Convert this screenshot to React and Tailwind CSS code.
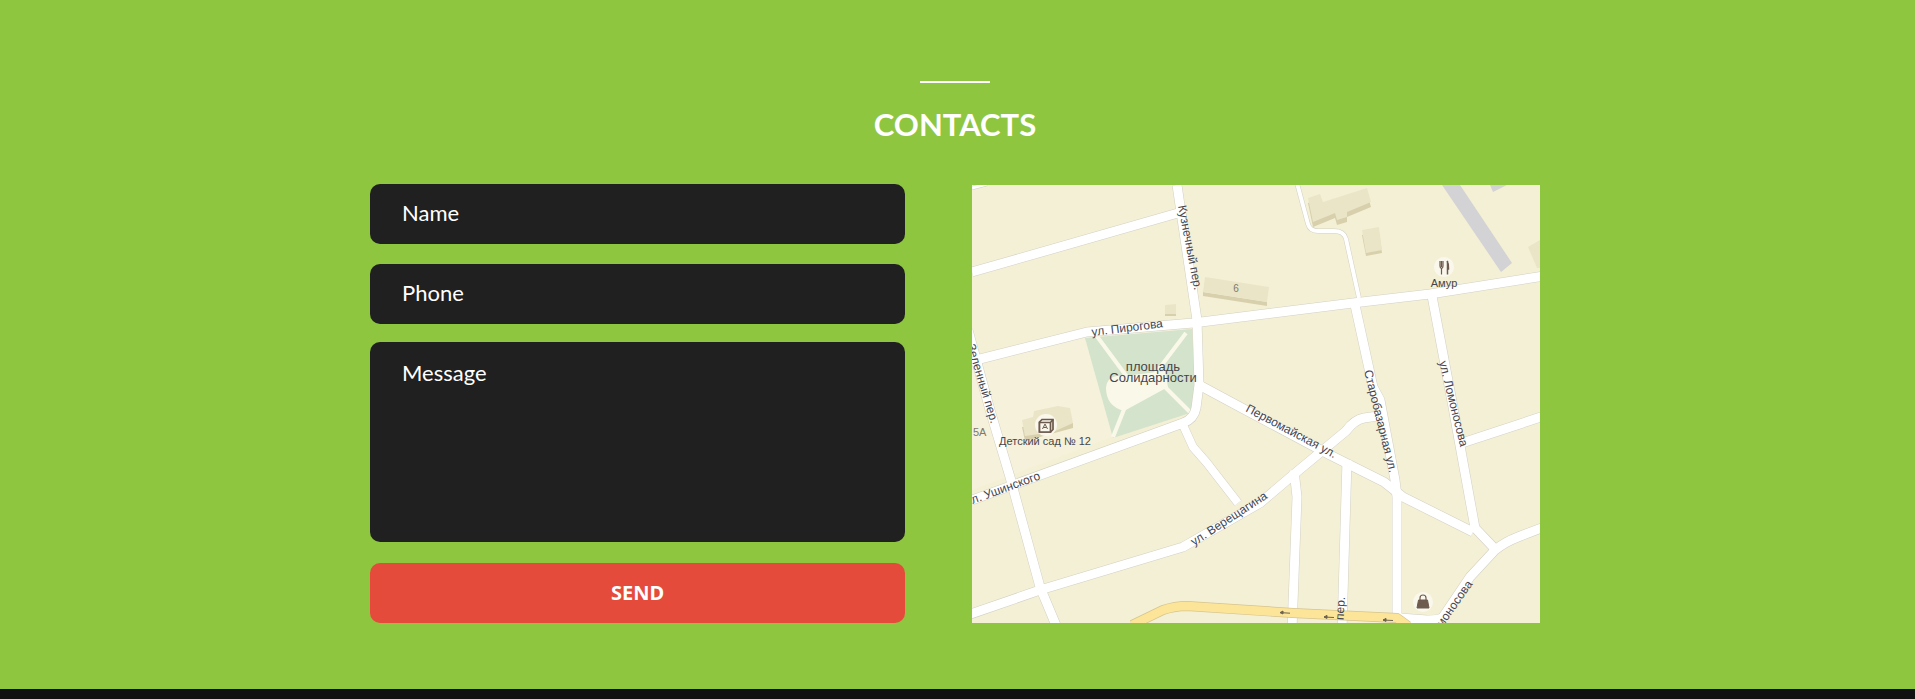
const font = { fontFamily: '"Liberation Sans", Arial, sans-serif' };

// roads are drawn twice, casing first and then the white fill
const ROADS = [
  { d: "M972 272L1178 213", w: 9 },
  { d: "M972 500L1183 423Q1194 419 1196 408L1199 385L1197 320L1177 185", w: 9 },
  { d: "M968 362L1087 332L1193 323L1353 303L1430 294L1544 276", w: 9 },
  { d: "M968 330L990 410L1010 477L1040 587L1058 630", w: 9 },
  { d: "M968 615L1040 590L1183 547L1260 503L1293 475L1346 431Q1354 420 1364 418L1378 416", w: 9 },
  { d: "M1201 386L1240 407L1330 455L1384 482L1403 497L1473 532", w: 9 },
  { d: "M1355 305L1373 387L1380 400L1395 480L1397 497L1397 630", w: 9 },
  { d: "M1432 296L1453 407L1475 528L1495 549", w: 9 },
  { d: "M1462 443L1544 416", w: 9 },
  { d: "M1544 527L1518 537Q1505 542 1495 550L1470 577L1443 617Q1440 620 1427 620L1400 618", w: 9 },
  { d: "M1294 470L1297 497L1292 630", w: 9 },
  { d: "M1347 460L1342 630", w: 9 },
  { d: "M1183 425L1193 447L1207 463L1238 503", w: 8 },
  { d: "M1297 183L1308 224Q1310 231 1318 231L1334 231Q1344 231 1346 239L1359 298", w: 4 },
  { d: "M972 188L987 184", w: 3 },
];

const LABELS = [
  { t: "Кузнечный пер.", x: 1178, y: 206, r: 79 },
  { t: "ул. Пирогова", x: 1092, y: 336, r: -7 },
  { t: "ул. Ломоносова", x: 1439, y: 362, r: 76 },
  { t: "Старобазарная ул.", x: 1364, y: 371, r: 76 },
  { t: "Первомайская ул.", x: 1245, y: 411, r: 28 },
  { t: "ул. Верещагина", x: 1194, y: 546, r: -33 },
  { t: "ул. Ломоносова", x: 1473, y: 584, r: -55, end: true },
  { t: "ул. Ушинского", x: 1041, y: 479, r: -20, end: true },
  { t: "Зеленный пер.", x: 991, y: 424, r: 73, end: true },
  { t: "пер.", x: 1345, y: 597, r: -86, end: true },
];

function MapPicture() {
  return (
    <svg viewBox="972 185 568 438" className="block h-[438px] w-[568px] bg-[#f4f0d5]" style={font}>
      <path d="M972 362L1087 332L1192 329L1196 405L972 490Z" fill="#f6f1da" />

      <path d="M1085 338L1192 329L1196 400L1190 413L1113 438Z" fill="#d4e3cb" />
      <g stroke="#faf9e9" strokeWidth="4" fill="none">
        <path d="M1096 335L1133 385" />
        <path d="M1186 333L1152 378" />
        <path d="M1162 384L1192 414" />
        <path d="M1127 402L1113 437" />
      </g>
      <path d="M1106 388Q1107 374 1125 376L1165 371L1168 387L1124 411Q1106 406 1106 388Z" fill="#faf9e9" />

      <g fill="#d8d0ac">
        <path d="M1308 203L1320 199L1323 207L1367 193L1371 207L1347 217L1347 222L1337 225L1335 218L1313 227Z" />
        <path d="M1362 235L1379 232L1382 253L1366 256Z" />
        <path d="M1203 292L1267 302L1267 306L1203 296Z" />
        <path d="M1165 311L1176 311L1176 316L1165 316Z" />
        <path d="M1022 427L1073 423L1073 428L1025 441Z" />
      </g>
      <g fill="#ebe5c8">
        <path d="M1308 198L1320 194L1323 202L1367 188L1371 202L1347 212L1347 217L1337 220L1335 213L1313 222Z" />
        <path d="M1362 230L1379 227L1382 250L1366 253Z" />
        <path d="M1205 277L1269 287L1267 302L1203 292Z" />
        <path d="M1165 305L1176 304L1176 314L1165 314Z" />
        <path d="M1022 420L1033 417L1034 411L1058 406L1070 408L1073 423L1053 432L1025 436Z" />
        <path d="M1528 247L1540 240L1540 268L1537 268Z" />
      </g>
      <path d="M1442 185L1460 185L1512 263L1501 272Z" fill="#d3d2d4" />
      <path d="M1490 185L1507 185L1493 192Z" fill="#d3d2d4" />

      <g fill="none" strokeLinejoin="round">
        {ROADS.map((r) => (
          <path key={r.d} d={r.d} stroke="#d2d0c4" strokeWidth={r.w + 1} />
        ))}
        {ROADS.map((r) => (
          <path key={r.d} d={r.d} stroke="#ffffff" strokeWidth={r.w} />
        ))}
        <path d="M1132 625L1163 610Q1175 606 1187 606L1293 613L1397 618L1408 626" stroke="#d6c48e" strokeWidth="10" />
        <path d="M1132 625L1163 610Q1175 606 1187 606L1293 613L1397 618L1408 626" stroke="#fce598" strokeWidth="8.6" />
      </g>
      <g stroke="#6d6350" strokeWidth="1" fill="#6d6350">
        <path d="M1280 612.6L1290 613.2M1280 612.6l3-1.6v3z" />
        <path d="M1324 617L1334 617.5M1324 617l3-1.6v3z" />
        <path d="M1383 620L1393 620.5M1383 620l3-1.6v3z" />
      </g>

      <g fill="#45454e" fontSize="12">
        {LABELS.map((l) => (
          <text
            key={l.t + l.x}
            x={l.x}
            y={l.y}
            textAnchor={l.end ? "end" : "start"}
            transform={`rotate(${l.r} ${l.x} ${l.y})`}
          >
            {l.t}
          </text>
        ))}
        <text x="1153" y="371" fontSize="13" textAnchor="middle">площадь</text>
        <text x="1153" y="382" fontSize="13" textAnchor="middle">Солидарности</text>
        <text x="1045" y="445" fontSize="11" textAnchor="middle">Детский сад № 12</text>
        <text x="1444" y="287" fontSize="11" textAnchor="middle">Амур</text>
        <text x="973" y="436" fontSize="11" fill="#7c7a6c">5А</text>
        <text x="1236" y="292" fontSize="10" fill="#7c7a6c" textAnchor="middle">6</text>
      </g>

      {/* poi markers */}
      <circle cx="1444" cy="267" r="10" fill="#faf8ec" />
      <g stroke="#6b5a4d" fill="none" strokeWidth="1.2">
        <path d="M1440 261v5q0 2 1.500 2.500v6M1443 261v5q0 2 -1.500 2.500M1441.500 261v6" />
        <path d="M1447 261q2 3 1.500 8h-1.500M1447.500 261v13.500" strokeWidth="1.500" />
      </g>
      <circle cx="1046" cy="425" r="11" fill="#faf8ec" />
      <g stroke="#6b5a4d" fill="#faf8ec" strokeWidth="1.700">
        <path d="M1042 419.500h11v10l-2.500 2.500h-11v-10z" />
        <path d="M1039.500 422.500h11v9.500h-11zM1050.500 422.500l2.500 -3" />
      </g>
      <path d="M1042.500 429l2.500 -5 2.500 5M1043.500 427.500h3" stroke="#6b5a4d" fill="none" strokeWidth="1" />
      <circle cx="1423" cy="602" r="10" fill="#faf8ec" />
      <path d="M1417 608L1418.500 600h9L1429 608Z" fill="#6e5b4e" stroke="#6e5b4e" strokeLinejoin="round" />
      <path d="M1420 601v-3a3 3 0 0 1 6 0v3" fill="none" stroke="#6e5b4e" strokeWidth="1.200" />
    </svg>
  );
}

export default function App() {
  const fieldClass =
    "block w-full rounded-[10px] bg-[#202020] px-[32px] text-[22px] text-white outline-none placeholder:text-white";

  return (
    <div className="h-[699px] overflow-hidden bg-[#111111]">
      <section className="h-[689px] bg-[#8ec63f] pr-[5px] pt-[81px]">
        <div className="mx-auto h-[2px] w-[70px] bg-white" />
        <h2
          className="mt-[23px] text-center text-[31px] font-bold leading-[36px] text-white"
          style={{ fontFamily: "Lato, sans-serif" }}
        >
          CONTACTS
        </h2>

        <div className="mx-auto mt-[42px] flex w-[1170px] items-start justify-between">
          <form className="w-[535px]" style={{ fontFamily: "Lato, sans-serif" }}>
            <input className={`${fieldClass} h-[60px] pb-[3px]`} placeholder="Name" />
            <input className={`${fieldClass} mt-[20px] h-[60px] pb-[3px]`} placeholder="Phone" />
            <textarea className={`${fieldClass} mt-[18px] h-[200px] resize-none pt-[14px]`} placeholder="Message" />
            <button
              type="button"
              className="mt-[21px] block h-[60px] w-full rounded-[10px] bg-[#e54b3a] text-[20px] font-bold text-white"
              style={{ fontFamily: '"Noto Sans", sans-serif' }}
            >
              SEND
            </button>
          </form>
          <div className="mt-px">
            <MapPicture />
          </div>
        </div>
      </section>
    </div>
  );
}
